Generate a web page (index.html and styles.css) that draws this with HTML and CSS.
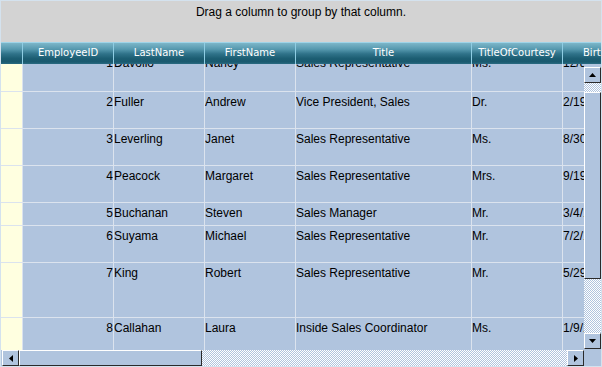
FILE: index.html
```html
<!DOCTYPE html>
<html lang="en">
<head>
  <meta charset="UTF-8">
  <title>Employees Grid</title>
  <link rel="stylesheet" href="styles.css">
</head>
<body>

  <div class="grid">
    <div class="group-panel">Drag a column to group by that column.</div>

    <div class="head">
      <div class="hc sel"></div>
      <div class="hc id">EmployeeID</div>
      <div class="hc last">LastName</div>
      <div class="hc first">FirstName</div>
      <div class="hc title">Title</div>
      <div class="hc toc">TitleOfCourtesy</div>
      <div class="hc birth">BirthDate</div>
    </div>

    <div class="body">
      <div class="viewport">
        <div class="row r1">
          <div class="c sel"></div><div class="c id">1</div><div class="c last">Davolio</div><div class="c first">Nancy</div><div class="c title">Sales Representative</div><div class="c toc">Ms.</div><div class="c birth">12/8/1948</div>
        </div>
        <div class="row">
          <div class="c sel"></div><div class="c id">2</div><div class="c last">Fuller</div><div class="c first">Andrew</div><div class="c title">Vice President, Sales</div><div class="c toc">Dr.</div><div class="c birth">2/19/1952</div>
        </div>
        <div class="row">
          <div class="c sel"></div><div class="c id">3</div><div class="c last">Leverling</div><div class="c first">Janet</div><div class="c title">Sales Representative</div><div class="c toc">Ms.</div><div class="c birth">8/30/1963</div>
        </div>
        <div class="row">
          <div class="c sel"></div><div class="c id">4</div><div class="c last">Peacock</div><div class="c first">Margaret</div><div class="c title">Sales Representative</div><div class="c toc">Mrs.</div><div class="c birth">9/19/1937</div>
        </div>
        <div class="row short">
          <div class="c sel"></div><div class="c id">5</div><div class="c last">Buchanan</div><div class="c first">Steven</div><div class="c title">Sales Manager</div><div class="c toc">Mr.</div><div class="c birth">3/4/1955</div>
        </div>
        <div class="row">
          <div class="c sel"></div><div class="c id">6</div><div class="c last">Suyama</div><div class="c first">Michael</div><div class="c title">Sales Representative</div><div class="c toc">Mr.</div><div class="c birth">7/2/1963</div>
        </div>
        <div class="row tall">
          <div class="c sel"></div><div class="c id">7</div><div class="c last">King</div><div class="c first">Robert</div><div class="c title">Sales Representative</div><div class="c toc">Mr.</div><div class="c birth">5/29/1960</div>
        </div>
        <div class="row">
          <div class="c sel"></div><div class="c id">8</div><div class="c last">Callahan</div><div class="c first">Laura</div><div class="c title">Inside Sales Coordinator</div><div class="c toc">Ms.</div><div class="c birth">1/9/1958</div>
        </div>
      </div>

      <div class="vscroll">
        <div class="gap-top"></div>
        <div class="btn"><svg width="7" height="4" viewBox="0 0 7 4"><polygon points="3.5,0 7,4 0,4" fill="#000"/></svg></div>
        <div class="track t1"></div>
        <div class="thumb"></div>
        <div class="track fill"></div>
        <div class="btn"><svg width="7" height="4" viewBox="0 0 7 4"><polygon points="0,0 7,0 3.5,4" fill="#000"/></svg></div>
        <div class="gap-bottom"></div>
      </div>
    </div>

    <div class="hscroll">
      <div class="btn left"><svg width="4" height="7" viewBox="0 0 4 7"><polygon points="4,0 4,7 0,3.5" fill="#000"/></svg></div>
      <div class="thumb"></div>
      <div class="track fill"></div>
      <div class="btn"><svg width="4" height="7" viewBox="0 0 4 7"><polygon points="0,0 4,3.5 0,7" fill="#000"/></svg></div>
      <div class="corner"></div>
    </div>
  </div>

</body>
</html>
```

FILE: styles.css
```css
* { margin: 0; padding: 0; box-sizing: border-box; }
body { font-family: "Liberation Sans", Arial, sans-serif; font-size: 12px; color: #000; background: #fff; }

.grid { width: 602px; height: 367px; border: 1px solid #d4e2ee; background: #b0c4de; display: flex; flex-direction: column; overflow: hidden; }

.group-panel { height: 41px; flex: none; background: #d3d3d3; text-align: center; padding-top: 4px; line-height: 14px; }

/* column header */
.head { display: flex; height: 22px; flex: none; border-top: 1px solid #9fd4e8; background: linear-gradient(#7cb6c9, #5598ae 30%, #2f7289 52%, #1b5c71 75%, #1a5a6f 90%, #2a6b82); overflow: hidden; }
.hc { flex: none; height: 21px; line-height: 20px; text-align: center; color: #fff; font-family: "DejaVu Sans", Verdana, sans-serif; font-size: 10px; border-right: 1px solid #8fcde3; white-space: nowrap; overflow: hidden; }
.hc.birth { border-right: none; text-align: left; padding-left: 20px; }

/* column widths (border included) */
.sel { width: 22px; }
.id { width: 91px; }
.last { width: 91px; }
.first { width: 91px; }
.title { width: 176px; }
.toc { width: 91px; }
.birth { width: 130px; }

/* rows */
.body { display: flex; height: 286px; flex: none; }
.viewport { width: 583px; overflow: hidden; }
.row { display: flex; height: 37px; border-bottom: 1px solid #dbe3ee; }
.row.r1 { height: 39px; margin-top: -11px; }
.row.short { height: 23px; }
.row.tall { height: 55px; }
.c { flex: none; padding-top: 3px; line-height: 14px; white-space: nowrap; overflow: hidden; border-right: 1px solid #dbe3ee; }
.c.sel { background: #ffffe0; }
.c.id { text-align: right; }

/* scrollbars */
.btn { flex: none; width: 17px; height: 16px; background: #b0c4de; border-top: 1px solid #fff; border-left: 1px solid #fff; border-right: 1px solid #2a2a2a; border-bottom: 1px solid #2a2a2a; display: flex; align-items: center; justify-content: center; }
.btn svg { display: block; }
.track { background: repeating-conic-gradient(#b0c4de 0 25%, #fff 0 50%) 0 0 / 2px 2px; }
.thumb { background: #b0c4de; border-top: 1px solid #fff; border-left: 1px solid #fff; border-right: 1px solid #2a2a2a; border-bottom: 1px solid #2a2a2a; }

.vscroll { width: 17px; flex: none; display: flex; flex-direction: column; }
.vscroll .gap-top { height: 3px; flex: none; }
.vscroll .btn { width: 17px; }
.vscroll .t1 { height: 9px; flex: none; }
.vscroll .thumb { height: 187px; flex: none; }
.vscroll .fill { flex: 1; }
.vscroll .gap-bottom { height: 1px; flex: none; }

.hscroll { display: flex; height: 16px; flex: none; }
.hscroll .btn.left { margin-left: 1px; }
.hscroll .thumb { width: 183px; flex: none; }
.hscroll .fill { flex: 1; }
.hscroll .corner { width: 17px; flex: none; background: #b0c4de; }
```
